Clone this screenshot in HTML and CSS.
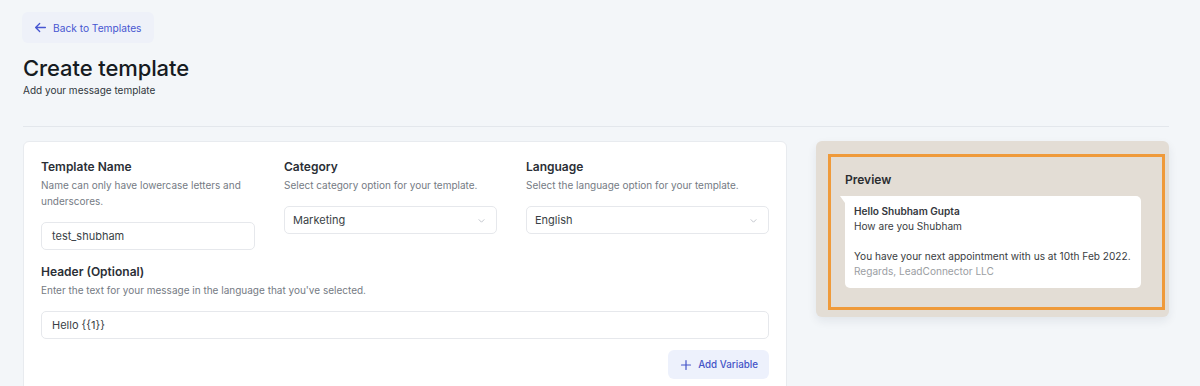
FILE: index.html
```html
<!DOCTYPE html>
<html lang="en">
<head>
    <meta charset="UTF-8">
    <meta name="viewport" content="width=device-width, initial-scale=1.0">
    <title>Create template</title>
    <link rel="stylesheet" href="styles.css">
</head>
<body>
    <div class="page">
        <a class="back-btn" href="#">
            <svg width="13" height="13" viewBox="0 0 16 16" fill="none" stroke="currentColor" stroke-width="1.6" stroke-linecap="round" stroke-linejoin="round"><path d="M14 8H2M7 3L2 8l5 5"/></svg>
            Back to Templates
        </a>

        <h1>Create template</h1>
        <p class="subtitle">Add your message template</p>

        <hr class="divider">

        <div class="main-layout">
            <div class="form-card">
                <div class="row-three">
                    <div class="form-group">
                        <div class="form-label">Template Name</div>
                        <div class="form-help">Name can only have lowercase letters and underscores.</div>
                        <div class="form-control">test_shubham</div>
                    </div>
                    <div class="form-group">
                        <div class="form-label">Category</div>
                        <div class="form-help">Select category option for your template.</div>
                        <div class="form-control form-select">
                            Marketing
                            <svg width="9" height="9" viewBox="0 0 16 16" fill="none" stroke="#b8bcc4" stroke-width="1.5"><path d="M3 6l5 5 5-5"/></svg>
                        </div>
                    </div>
                    <div class="form-group">
                        <div class="form-label">Language</div>
                        <div class="form-help">Select the language option for your template.</div>
                        <div class="form-control form-select">
                            English
                            <svg width="9" height="9" viewBox="0 0 16 16" fill="none" stroke="#b8bcc4" stroke-width="1.5"><path d="M3 6l5 5 5-5"/></svg>
                        </div>
                    </div>
                </div>

                <div class="form-group header-group">
                    <div class="form-label">Header (Optional)</div>
                    <div class="form-help">Enter the text for your message in the language that you've selected.</div>
                    <div class="form-control">Hello {{1}}</div>
                </div>

                <div class="actions">
                    <button class="btn-soft">
                        <svg width="12" height="12" viewBox="0 0 16 16" fill="none" stroke="currentColor" stroke-width="1.6" stroke-linecap="round"><path d="M8 2v12M2 8h12"/></svg>
                        Add Variable
                    </button>
                </div>
            </div>

            <div class="preview-card">
                <div class="preview-frame">
                    <div class="preview-title">Preview</div>
                    <div class="bubble">
                        <div class="bubble-head">Hello Shubham Gupta</div>
                        <div>How are you Shubham</div>
                        <div class="gap-line"></div>
                        <div>You have your next appointment with us at 10th Feb 2022.</div>
                        <div class="bubble-foot">Regards, LeadConnector LLC</div>
                    </div>
                </div>
            </div>
        </div>
    </div>
</body>
</html>
```

FILE: styles.css
```css
* {
    box-sizing: border-box;
}

body {
    font-family: Inter, 'Noto Sans', sans-serif;
    margin: 0;
    background-color: #f3f6f9;
    color: #1f2328;
    overflow: hidden;
}

.page {
    padding: 12px 31px 0 23px;
    height: 386px;
}

.back-btn {
    display: inline-flex;
    align-items: center;
    gap: 6px;
    height: 31px;
    padding: 0 12px 0 12px;
    background: #eef1f9;
    border-radius: 6px;
    color: #4756d1;
    font-size: 10.2px;
    text-decoration: none;
    margin-left: -1px;
}

h1 {
    font-size: 22px;
    font-weight: 500;
    margin: 11px 0 0 0;
    line-height: 28px;
    color: #161b22;
    letter-spacing: -0.1px;
}

.subtitle {
    font-size: 10px;
    color: #30363d;
    margin: 1px 0 0 0;
    line-height: 14px;
}

.divider {
    border: none;
    border-top: 1px solid #e3e7ec;
    margin: 29px 0 0 0;
}

.main-layout {
    display: flex;
    gap: 29px;
    margin-top: 14px;
    align-items: flex-start;
}

.form-card {
    width: 764px;
    height: 260px;
    background: white;
    border: 1px solid #e8ebef;
    border-radius: 6px;
    padding: 17px 17px 0 17px;
}

.row-three {
    display: grid;
    grid-template-columns: 214px 213px 1fr;
    gap: 29px;
}

.form-label {
    font-size: 12px;
    font-weight: 600;
    color: #2b2f36;
    line-height: 16px;
}

.form-help {
    font-size: 10px;
    color: #757b84;
    line-height: 16px;
    margin-top: 2px;
}

.form-control {
    display: flex;
    align-items: center;
    justify-content: space-between;
    height: 28px;
    margin-top: 13px;
    padding: 0 10px 0 10px;
    border: 1px solid #e6e8ec;
    border-radius: 5px;
    font-size: 11px;
    color: #3a3f46;
    background: white;
}

.form-select {
    padding-left: 8px;
}

.header-group {
    margin-top: 14px;
}

.header-group .form-control {
    margin-top: 13px;
}

.actions {
    display: flex;
    justify-content: flex-end;
    margin-top: 11px;
}

.btn-soft {
    display: inline-flex;
    align-items: center;
    gap: 6px;
    height: 29px;
    padding: 0 11px 0 12px;
    border: none;
    border-radius: 6px;
    background: #edf1fc;
    color: #4454c7;
    font-family: inherit;
    font-size: 9.8px;
    font-weight: 500;
}

.preview-card {
    width: 353px;
    height: 176px;
    background: #e3ddd5;
    border-radius: 6px;
    padding: 13px 4px 7px 12px;
    box-shadow: 0 4px 10px rgba(30, 40, 60, 0.08);
}

.preview-frame {
    height: 100%;
    border: 3px solid #ef9a3a;
    padding: 15px 21px 0 14px;
}

.preview-title {
    font-size: 12px;
    font-weight: 600;
    color: #2b2d31;
    line-height: 16px;
}

.bubble {
    position: relative;
    margin-top: 8px;
    background: white;
    border-radius: 0 5px 5px 5px;
    padding: 8px 6px 9px 9px;
    font-size: 10.1px;
    line-height: 15px;
    color: #3a3d42;
}

.bubble::before {
    content: "";
    position: absolute;
    left: -5px;
    top: 0;
    border-top: 7px solid white;
    border-left: 5px solid transparent;
}

.bubble-head {
    font-weight: 600;
    color: #35383d;
}

.gap-line {
    height: 15px;
}

.bubble-foot {
    color: #9b9ea3;
}
```
